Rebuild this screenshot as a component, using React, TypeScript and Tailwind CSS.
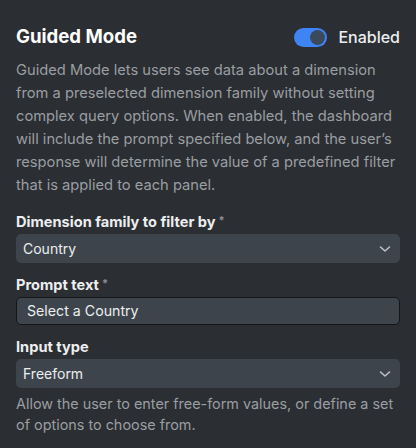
import React from "react";

const Chevron = () => (
  <svg width="12" height="12" viewBox="0 0 12 12" fill="none" className="shrink-0">
    <path d="M1.5 4 L6 8 L10.5 4" stroke="#bcc1c6" strokeWidth="1.6" strokeLinecap="round" strokeLinejoin="round" />
  </svg>
);

const Label = ({ text, required }: { text: string; required?: boolean }) => (
  <div className="flex items-start h-[20px] leading-[20px] text-[14.6px] font-bold text-[#eceef0]">
    <span>{text}</span>
    {required && <span className="text-[11px] leading-[14px] ml-[3px] mt-[1px] text-[#8b9096]">*</span>}
  </div>
);

const Select = ({ value }: { value: string }) => (
  <div className="mt-[2px] h-[29px] rounded-[5px] bg-[#3d444b] flex items-center justify-between pl-[7px] pr-[9px] text-[14px] text-[#eceef0]">
    <span>{value}</span>
    <Chevron />
  </div>
);

export default function App() {
  return (
    <div
      className="w-[416px] h-[448px] bg-[#2b2e32] px-4 pt-[23px] overflow-hidden"
      style={{ fontFamily: "Inter, 'Noto Sans', sans-serif" }}
    >
      <div className="flex items-center justify-between h-[28px]">
        <div className="text-[18.6px] font-bold text-white">Guided Mode</div>
        <div className="flex items-center gap-[11px]">
          <div className="w-[33px] h-[19px] rounded-full bg-[#3f84f4] relative">
            <div className="absolute right-[2px] top-[2px] w-[15px] h-[15px] rounded-full bg-[#3b4a5a]" />
          </div>
          <span className="text-[16px] font-medium text-[#eceef0]">Enabled</span>
        </div>
      </div>
      <p className="mt-[8px] text-[14.7px] leading-[23px] text-[#9a9ea2]">
        Guided Mode lets users see data about a dimension from a preselected dimension family without setting complex query options. When enabled, the dashboard will include the prompt specified below, and the user’s response will determine the value of a predefined filter that is applied to each panel.
      </p>
      <div className="mt-[15px]">
        <Label text="Dimension family to filter by" required />
        <Select value="Country" />
      </div>
      <div className="mt-[12px]">
        <Label text="Prompt text" required />
        <div className="mt-[2px] h-[28px] rounded-[5px] bg-[#3d444b] border border-[#141618] flex items-center pl-[10px] text-[14.2px] text-[#eceef0]">
          Select a Country
        </div>
      </div>
      <div className="mt-[12px]">
        <Label text="Input type" />
        <Select value="Freeform" />
      </div>
      <p className="mt-[5px] text-[14.4px] leading-[21px] text-[#9a9ea2]">
        Allow the user to enter free-form values, or define a set of options to choose from.
      </p>
    </div>
  );
}
